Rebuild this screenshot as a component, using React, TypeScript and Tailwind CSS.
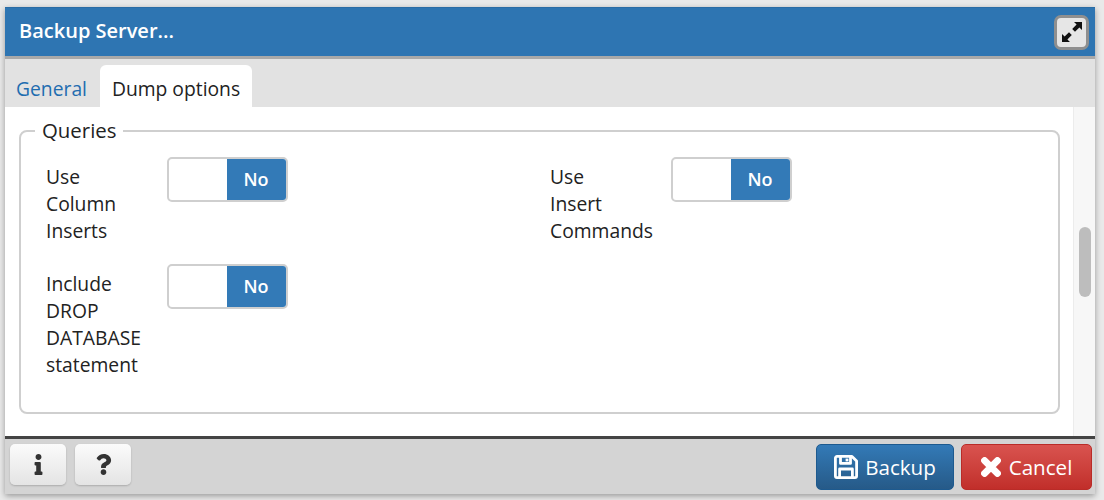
import React from "react";
import { FaInfo, FaQuestion } from "react-icons/fa";

function Toggle() {
  return (
    <div className="flex w-[121px] h-[45px] rounded-[5px] border-2 border-[#cfcfcf] overflow-hidden bg-white shrink-0">
      <div className="w-[58px]" />
      <div className="flex-1 bg-[#337ab7] text-white font-semibold flex items-center justify-center text-[18px] pr-[1px]">No</div>
    </div>
  );
}

function Field({ lines }: { lines: string[] }) {
  return (
    <div className="flex">
      <div className="w-[121px] pt-[6px] text-[19.3px] leading-[27px] text-[#222]">
        {lines.map((l) => (
          <div key={l}>{l}</div>
        ))}
      </div>
      <Toggle />
    </div>
  );
}

function ExpandIcon() {
  return (
    <svg width="20" height="20" viewBox="0 0 20 20" fill="#111">
      <path d="M12 0H20V8L17.4 5.4L13 9.8L10.2 7L14.6 2.6Z" />
      <path d="M8 20H0V12L2.6 14.6L7 10.2L9.8 13L5.4 17.4Z" />
    </svg>
  );
}

function SaveIcon() {
  return (
    <svg width="24" height="24" viewBox="0 0 24 24" fill="none" stroke="white" strokeWidth="2.8" strokeLinejoin="round">
      <path d="M3 1.4H18L22.6 6V21A1.6 1.6 0 0 1 21 22.6H3A1.6 1.6 0 0 1 1.4 21V3A1.6 1.6 0 0 1 3 1.4Z" />
      <path d="M6.5 1.6V8.4H16.5V1.6" />
      <path d="M5.6 22.4V14H18.4V22.4" />
      <path d="M13 3.6V6.4" />
    </svg>
  );
}

function TimesIcon() {
  return (
    <svg width="20" height="20" viewBox="0 0 20 20" fill="none" stroke="white" strokeWidth="7" strokeLinecap="round">
      <path d="M3.6 3.6L16.4 16.4M16.4 3.6L3.6 16.4" />
    </svg>
  );
}

export default function App() {
  return (
    <div className="w-[1104px] h-[500px] overflow-hidden bg-[#e9e9e9] pl-[5px] pr-[9px] pt-[7px] pb-[6px] font-['Open_Sans',sans-serif]">
      <div className="w-full h-full flex flex-col bg-[#e4e4e4] shadow-[0_2px_6px_rgba(0,0,0,0.35)]">
        <div className="h-[52px] shrink-0 bg-[#2e75b2] border-t border-[#2a6ca5] border-b-[3px] border-b-[#a9a9a9] flex items-center justify-between pl-[14px] pr-[6px]">
          <span className="text-white font-semibold text-[20px] leading-[26px] mt-[-2px]">Backup Server...</span>
          <button className="w-[35px] h-[35px] rounded-[7px] bg-[#e6e6e6] border-[3px] border-[#8f8f8f] flex items-center justify-center">
            <ExpandIcon />
          </button>
        </div>
        <div className="h-[48px] shrink-0 bg-[#e2e2e2] flex items-end pl-[11px]">
          <div className="h-[42px] pt-[6px] flex items-center text-[#1f6db0] text-[19.3px] w-[84px]">General</div>
          <div className="h-[42px] pt-[6px] w-[152px] bg-white rounded-t-[6px] flex items-center justify-center text-[19.3px] text-[#222]">Dump options</div>
        </div>
        <div className="flex-1 min-h-0 flex bg-white">
          <div className="flex-1 min-w-0 pl-[14px] pr-[13px] pt-[11px]">
            <fieldset className="h-[296px] border-2 border-[#cfcfcf] rounded-[8px] pl-[25px] pr-[20px] pb-0 pt-0">
              <legend className="ml-[-11px] px-[7px] text-[20.4px] leading-[25px] text-[#222]">Queries</legend>
              <div className="mt-[14px] flex">
                <div className="w-[504px] flex flex-col gap-[20px]">
                  <Field lines={["Use", "Column", "Inserts"]} />
                  <Field lines={["Include", "DROP", "DATABASE", "statement"]} />
                </div>
                <Field lines={["Use", "Insert", "Commands"]} />
              </div>
            </fieldset>
          </div>
          <div className="w-[22px] shrink-0 bg-[#f7f7f7] border-l border-[#ececec] pt-[120px] flex justify-center">
            <div className="w-[12px] h-[70px] rounded-full bg-[#bdbdbd]" />
          </div>
        </div>
        <div className="h-[58px] shrink-0 bg-[#d4d4d4] border-t-[3px] border-[#444] flex justify-between pl-[5px] pr-[3px] pt-[5px]">
          <div className="flex gap-[9px]">
            <button className="w-[56px] h-[41px] rounded-[5px] bg-gradient-to-b from-[#fbfbfb] to-[#e4e4e4] shadow-[0_1px_2px_rgba(0,0,0,0.2)] flex items-center justify-center text-[#333]">
              <FaInfo size={21} />
            </button>
            <button className="w-[56px] h-[41px] rounded-[5px] bg-gradient-to-b from-[#fbfbfb] to-[#e4e4e4] shadow-[0_1px_2px_rgba(0,0,0,0.2)] flex items-center justify-center text-[#333]">
              <FaQuestion size={21} />
            </button>
          </div>
          <div className="flex gap-[7px]">
            <button className="w-[138px] h-[46px] rounded-[5px] border border-[#1d5a8f] bg-gradient-to-b from-[#337ab7] to-[#265a88] text-white flex items-center justify-center gap-[7px] text-[20.6px]">
              <SaveIcon />
              <span>Backup</span>
            </button>
            <button className="w-[131px] h-[46px] rounded-[5px] border border-[#b92c28] bg-gradient-to-b from-[#d9534f] to-[#c12e2a] text-white flex items-center justify-center gap-[8px] text-[20.6px]">
              <TimesIcon />
              <span>Cancel</span>
            </button>
          </div>
        </div>
      </div>
    </div>
  );
}
